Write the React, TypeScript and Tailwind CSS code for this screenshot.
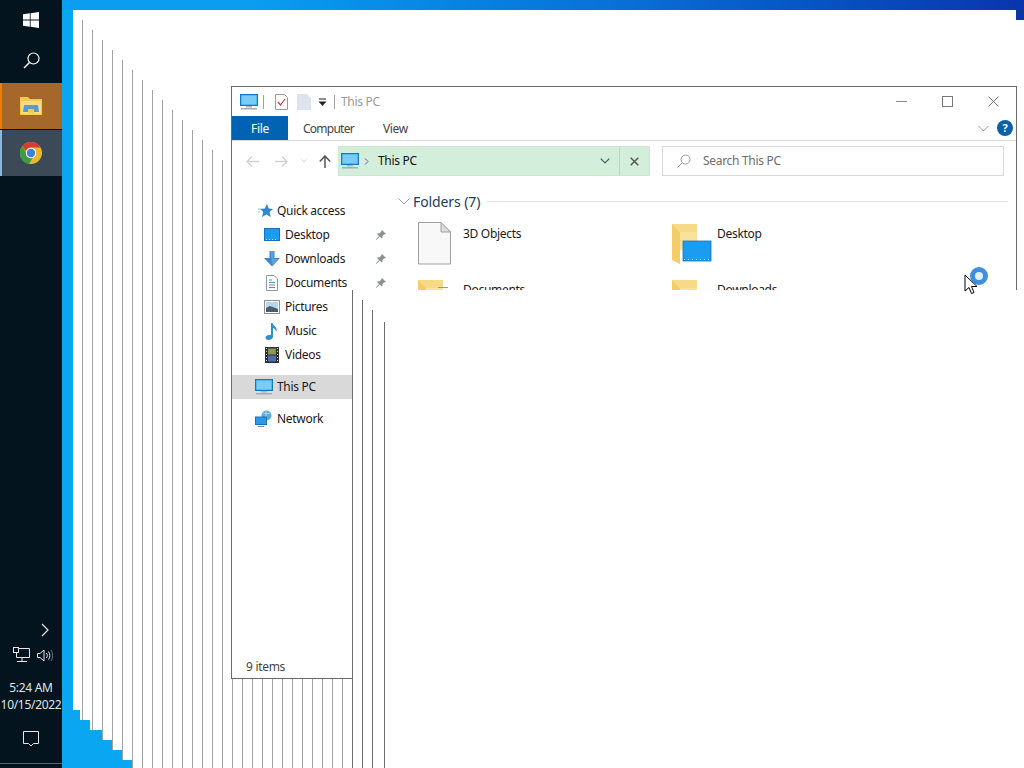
const font = 'font-["Noto_Sans","Open_Sans",sans-serif] tracking-[-0.3px]';

type Ghost = { left: number; line: number; top: number; bottom: number; right: number; color: string };

// trail of window outlines left behind on the desktop
const ghosts: Ghost[] = Array.from({ length: 32 }, (_, i) => {
  if (i === 0) return { left: 73, line: -1, top: 10, bottom: 710, right: 1016, color: '' };
  const x = i === 31 ? 384 : 82 + 10 * (i - 1);
  const left = i === 1 ? 80 : i === 2 ? 90 : x;
  const top = i === 31 ? 322 : 10 + 10 * i;
  return { left, line: x - left, top, bottom: 710 + 10 * i, right: 1024, color: i >= 28 ? '#6e6e6e' : '#a3a3a3' };
});

function GhostWindow({ g }: { g: Ghost }) {
  return (
    <div
      className="absolute bg-white"
      style={{ left: g.left - 62, top: g.top, width: g.right - g.left, height: g.bottom - g.top }}
    >
      {g.line >= 0 && <div className="absolute inset-y-0 w-px" style={{ left: g.line, background: g.color }} />}
    </div>
  );
}

function PcIcon({ size = 18 }: { size?: number }) {
  return (
    <svg width={size} height={size} viewBox="0 0 18 18">
      <rect x="0.5" y="1.5" width="17" height="11" fill="#2aa4ee" stroke="#1279c4" />
      <rect x="1.5" y="2.5" width="15" height="9" fill="#7accf7" />
      <rect x="6" y="13" width="6" height="1.5" fill="#a9bac5" />
      <rect x="1" y="15" width="16" height="1.5" fill="#a3aeb5" />
    </svg>
  );
}

function FolderIcon({ overlay, doc }: { overlay?: boolean; doc?: boolean }) {
  return (
    <svg width="40" height="42" viewBox="0 0 40 42">
      <path d="M0 2h25v26H8L0 24z" fill="#f9e29c" />
      <path d="M0 2h25v8H9z" fill="#f7da85" />
      <path d="M0 2l8 8v32L0 38z" fill="#f3cd68" />
      {doc && <path d="M20 9.500h10" stroke="#9a9a8a" />}
      {overlay && (
        <>
          <rect x="11" y="19" width="28" height="20" fill="#1a9df0" stroke="#1673ba" strokeWidth="0.8" />
          <path d="M12 37.5h26" stroke="#cfe9fb" strokeDasharray="1 3" />
        </>
      )}
    </svg>
  );
}

function NavIcon({ kind }: { kind: string }) {
  if (kind === 'star')
    return (
      <svg width="16" height="16" viewBox="0 0 16 16">
        <path d="M9 1l1.700 4.400L15 6l-3.400 3 1 5L8.500 11.500 4 14l1.300-5L2 6l4.800-.5z" fill="#2f86d2" />
        <path d="M0 6h3M0 9h2" stroke="#8fc2ea" />
      </svg>
    );
  if (kind === 'desktop')
    return (
      <svg width="16" height="14" viewBox="0 0 16 14">
        <rect x="0.500" y="0.500" width="15" height="12" fill="#1a9df0" stroke="#1673ba" />
        <path d="M2 11.500h12" stroke="#cfe9fb" strokeDasharray="1 2" />
      </svg>
    );
  if (kind === 'down')
    return (
      <svg width="16" height="16" viewBox="0 0 16 16">
        <path d="M5.500 0h5v7H16l-8 8.500L0 7h5.500z" fill="#3c86cc" />
        <path d="M6.500 0h3v8H14l-6 6z" fill="#5ba3e0" />
      </svg>
    );
  if (kind === 'doc')
    return (
      <svg width="14" height="16" viewBox="0 0 14 16">
        <path d="M1.500.5H9L12.500 4v11.500h-11z" fill="#fff" stroke="#8d9aa3" />
        <path d="M4 5h3M4 7.500h6M4 10h6M4 12.500h6" stroke="#4b91b5" />
      </svg>
    );
  if (kind === 'pics')
    return (
      <svg width="16" height="14" viewBox="0 0 16 14">
        <rect x="0.500" y="0.500" width="15" height="13" fill="#fff" stroke="#8a8f93" />
        <rect x="2" y="2" width="12" height="10" fill="#b8d6ea" />
        <path d="M2 8l4-2 8 3v3H2z" fill="#4a5d6a" />
      </svg>
    );
  if (kind === 'music')
    return (
      <svg width="14" height="17" viewBox="0 0 14 17">
        <path d="M6 0h1.500c.5 3 5.500 4 4 9-.5-2-2-3.500-3.500-4v8.500C8 15.500 6 17 3.500 17 1.500 17 0.500 15.800.5 14.500c0-1.800 2-3 5.500-2.500z" fill="#2d8fd0" />
      </svg>
    );
  if (kind === 'video')
    return (
      <svg width="14" height="16" viewBox="0 0 14 16">
        <rect width="14" height="16" fill="#2e2e2e" />
        <rect x="3" y="1.500" width="8" height="6" fill="#8a9a55" />
        <rect x="3" y="8.500" width="8" height="6" fill="#4c6fb0" />
        <path d="M1.500 1v14M12.500 1v14" stroke="#ddd" strokeDasharray="1 2" />
      </svg>
    );
  return (
    <svg width="18" height="18" viewBox="0 0 18 18">
      <circle cx="11.500" cy="5.500" r="5" fill="#5fa9d8" />
      <path d="M8 3c2 1 5 1 7 0M11 .500v10" stroke="#d3e8f5" strokeWidth="0.700" fill="none" />
      <rect x="0.500" y="7" width="11" height="7.500" fill="#2a9ae6" stroke="#1673ba" />
      <path d="M3 16.500h6" stroke="#7d8d98" />
    </svg>
  );
}

function Pin() {
  return (
    <svg width="10" height="10" viewBox="0 0 10 10">
      <path d="M6 0l4 4-1 .6-.8-.3L6.400 6.200l.2 1.600-.8.700-2-2L.800 9.700 0 9.200l3-3.200-2-2 .8-.8 1.500.3L5.500 1.600l-.2-.8z" fill="#8b8f93" />
    </svg>
  );
}

function NavRow({ icon, label, pin }: { icon: string; label: string; pin?: boolean }) {
  return (
    <div className="flex h-6 items-center pl-[31px]">
      <div className="flex w-[22px] items-center justify-center pr-[4px]">
        <NavIcon kind={icon} />
      </div>
      <span className="flex-1">{label}</span>
      {pin && (
        <span className="mr-[11px]">
          <Pin />
        </span>
      )}
    </div>
  );
}

function FolderItem({ label, doc, overlay, docFolder }: { label: string; doc?: boolean; overlay?: boolean; docFolder?: boolean }) {
  return (
    <div className="flex h-[56px]">
      <div className="w-[45px] shrink-0">
        {doc ? (
          <svg width="34" height="43" viewBox="0 0 34 43">
            <path d="M.5.500H23L32.500 10v32H.5z" fill="#f8f8f8" stroke="#a0a0a0" />
            <path d="M23 .500V10h9.500z" fill="#dcdcdc" stroke="#a0a0a0" />
          </svg>
        ) : (
          <FolderIcon overlay={overlay} doc={docFolder} />
        )}
      </div>
      <span className="mt-[3px] leading-[18px]">{label}</span>
    </div>
  );
}

function Explorer() {
  return (
    <div className="absolute left-[169px] top-[86px] flex h-[593px] w-[786px] flex-col border border-[#6b6b6b] bg-white text-[12px] text-[#1a1a1a]">
      {/* title bar */}
      <div className="flex h-[29px] shrink-0 items-center pl-[8px] text-[#9a9a9a]">
        <PcIcon />
        <div className="ml-[5px] h-[14px] w-px bg-[#a0a0a0]" />
        <svg className="ml-[11px]" width="13" height="16" viewBox="0 0 13 16">
          <path d="M.5.500h9l3 3v12H.5z" fill="#fff" stroke="#9a9a9a" />
          <path d="M3 8l2.500 3L10 5" stroke="#c8483c" strokeWidth="1.200" fill="none" />
        </svg>
        <svg className="ml-[9px]" width="14" height="16" viewBox="0 0 14 16">
          <path d="M0 0h10l4 4v12H0z" fill="#dde4ee" />
        </svg>
        <svg className="ml-[7px]" width="9" height="8" viewBox="0 0 9 8">
          <path d="M1 1h7" stroke="#222" />
          <path d="M.5 3.500h8L4.500 8z" fill="#222" />
        </svg>
        <div className="ml-[7px] h-[14px] w-px bg-[#a0a0a0]" />
        <span className="ml-[6px]">This PC</span>
        <div className="ml-auto flex items-center">
          <svg width="11" height="11" viewBox="0 0 11 11">
            <path d="M0 5.500h11" stroke="#8a8a8a" />
          </svg>
          <svg className="ml-[35px]" width="11" height="11" viewBox="0 0 11 11">
            <rect x="0.500" y="0.500" width="10" height="10" fill="none" stroke="#777" />
          </svg>
          <svg className="ml-[35px] mr-[17px]" width="11" height="11" viewBox="0 0 11 11">
            <path d="M.5.500l10 10M10.500.500l-10 10" stroke="#777" />
          </svg>
        </div>
      </div>

      {/* ribbon tabs */}
      <div className="flex h-[25px] shrink-0 items-center border-b border-[#dadada] text-[#444]">
        <div className="flex h-[24px] w-[56px] items-center justify-center bg-[#0063b1] pt-[1px] text-white">File</div>
        <span className="ml-[15px] pt-[1px] tracking-[-0.75px]">Computer</span>
        <span className="ml-[29px] pt-[1px]">View</span>
        <svg className="ml-auto" width="11" height="7" viewBox="0 0 11 7">
          <path d="M.5 1l5 5 5-5" stroke="#9a9a9a" fill="none" />
        </svg>
        <div className="ml-[8px] mr-[3px] flex h-4 w-4 items-center justify-center rounded-full bg-[#0c5fa8] text-[11px] font-bold text-white">
          ?
        </div>
      </div>

      {/* address row */}
      <div className="flex shrink-0 items-start pb-[14px] pt-[5px]">
        <div className="flex h-[30px] w-[106px] items-center pl-[14px]">
          <svg width="13" height="11" viewBox="0 0 13 11">
            <path d="M6 .5L1 5.500l5 5M1 5.500h12" stroke="#d2d2d2" strokeWidth="1.300" fill="none" />
          </svg>
          <svg className="ml-[16px]" width="13" height="11" viewBox="0 0 13 11">
            <path d="M7 .5l5 5-5 5M12 5.500H0" stroke="#d2d2d2" strokeWidth="1.300" fill="none" />
          </svg>
          <svg className="ml-[13px]" width="6" height="4" viewBox="0 0 6 4">
            <path d="M.5.500l2.500 2.500L5.500.500" stroke="#d2d2d2" fill="none" />
          </svg>
          <svg className="ml-[12px]" width="12" height="13" viewBox="0 0 12 13">
            <path d="M.8 6.500L6 1l5.200 5.500M6 1v12" stroke="#555" strokeWidth="1.500" fill="none" />
          </svg>
        </div>
        <div className="flex h-[30px] w-[312px] items-center border border-[#cbe6d4] bg-[#d3efdc]">
          <div className="ml-[2px]">
            <PcIcon />
          </div>
          <svg className="ml-[5px]" width="5" height="7" viewBox="0 0 5 7">
            <path d="M1 .5l3 3-3 3" stroke="#666" fill="none" />
          </svg>
          <span className="ml-[9px] flex-1 text-[#111]">This PC</span>
          <svg className="mr-[9px]" width="10" height="6" viewBox="0 0 10 6">
            <path d="M.7.700L5 5 9.300.700" stroke="#555" strokeWidth="1.200" fill="none" />
          </svg>
          <div className="flex h-full w-[30px] items-center justify-center border-l border-[#bcd8c5]">
            <svg width="9" height="9" viewBox="0 0 9 9">
              <path d="M.7.700l7.600 7.600M8.300.700L.7 8.300" stroke="#555" strokeWidth="1.500" />
            </svg>
          </div>
        </div>
        <div className="ml-[12px] flex h-[30px] w-[342px] items-center border border-[#d9d9d9] pl-[14px] text-[#6d6d6d]">
          <svg width="14" height="14" viewBox="0 0 14 14">
            <circle cx="8.500" cy="5.500" r="4.500" fill="none" stroke="#9a9a9a" />
            <path d="M5 9l-4.500 4.500" stroke="#9a9a9a" />
          </svg>
          <span className="ml-[12px]">Search This PC</span>
        </div>
      </div>

      {/* body */}
      <div className="flex min-h-0 flex-1">
        <nav className="flex w-[165px] shrink-0 flex-col pt-[9px]">
          <div className="flex h-6 items-center pl-[26px]">
            <div className="w-[19px]">
              <NavIcon kind="star" />
            </div>
            <span>Quick access</span>
          </div>
          <NavRow icon="desktop" label="Desktop" pin />
          <NavRow icon="down" label="Downloads" pin />
          <NavRow icon="doc" label="Documents" pin />
          <NavRow icon="pics" label="Pictures" />
          <NavRow icon="music" label="Music" />
          <NavRow icon="video" label="Videos" />
          <div className="mt-2 flex h-6 items-center bg-[#d9d9d9] pl-[23px]">
            <div className="w-[22px]">
              <PcIcon />
            </div>
            <span>This PC</span>
          </div>
          <div className="mt-2 flex h-6 items-center pl-[23px]">
            <div className="w-[22px]">
              <NavIcon kind="net" />
            </div>
            <span>Network</span>
          </div>
          <div className="mt-auto flex h-[22px] items-center pl-[14px] text-[#444]">9 items</div>
        </nav>
        <section className="min-w-0 flex-1">
          <div className="flex h-[22px] items-center pl-[1px]">
            <svg width="12" height="7" viewBox="0 0 12 7">
              <path d="M.5.500L6 6 11.500.500" stroke="#9aa3ab" fill="none" />
            </svg>
            <span className="ml-[3px] text-[14px] tracking-[-0.1px] text-[#1e3a5f]">Folders (7)</span>
            <div className="ml-[7px] mr-[8px] h-px flex-1 bg-[#e3e3e3]" />
          </div>
          <div className="grid grid-cols-[254px_254px] pl-[21px] pt-[10px]">
            <FolderItem label="3D Objects" doc />
            <FolderItem label="Desktop" overlay />
            <FolderItem label="Documents" docFolder />
            <FolderItem label="Downloads" />
          </div>
        </section>
      </div>
    </div>
  );
}

function Taskbar() {
  return (
    <aside className="relative flex h-full w-[62px] shrink-0 flex-col bg-[#04141f] text-[12px] text-[#dfe6ea]">
      <div className="flex h-[40px] items-center justify-center">
        <svg width="16" height="16" viewBox="0 0 16 16">
          <path d="M0 2.300l6.800-1v6.300H0zM7.600 1.200L16 0v7.600H7.600zM0 8.400h6.800v6.300l-6.800-1zM7.600 8.400H16V16l-8.400-1.200z" fill="#fff" />
        </svg>
      </div>
      <div className="flex h-[43px] items-center justify-center pb-[3px]">
        <svg width="17" height="17" viewBox="0 0 17 17">
          <circle cx="10.500" cy="6.500" r="5.500" fill="none" stroke="#fff" strokeWidth="1.200" />
          <path d="M6.500 10.500L1 16" stroke="#fff" strokeWidth="1.400" />
        </svg>
      </div>
      <div className="flex h-[46px] items-center justify-center border-l-2 border-[#f07c00] bg-[#a5672a] pr-[2px]">
        <svg width="22" height="20" viewBox="0 0 22 20">
          <path d="M0 1h8l2 2h12v16H0z" fill="#f4c84e" />
          <rect x="1" y="5" width="20" height="13" fill="#f8dc88" />
          <path d="M4 9h14l1 7H3z" fill="#5e9ac8" />
          <rect x="8" y="13" width="6" height="4" fill="#f4c84e" />
        </svg>
      </div>
      <div className="mt-px flex h-[46px] items-center justify-center border-l-2 border-[#8ab8e0] bg-[#3c4a58] pr-[2px]">
        <svg width="22" height="22" viewBox="0 0 22 22">
          <circle cx="11" cy="11" r="11" fill="#e8b92f" />
          <path d="M11 0a11 11 0 0 1 9.500 5.500H11a5.500 5.500 0 0 0-5.200 3.700L2.400 4A11 11 0 0 1 11 0z" fill="#d63c30" />
          <path d="M2.400 4l4.600 8.500a5 5 0 0 0 5.500 3.400L9 22A11 11 0 0 1 2.400 4z" fill="#3f9a45" />
          <circle cx="11" cy="11" r="5.200" fill="#fff" />
          <circle cx="11" cy="11" r="4.200" fill="#3f7fe0" />
        </svg>
      </div>
      <div className="flex-1" />
      <div className="flex flex-col items-center">
        <svg className="ml-[28px]" width="9" height="14" viewBox="0 0 9 14">
          <path d="M1 1l6 6-6 6" stroke="#e6e6e6" strokeWidth="1.200" fill="none" />
        </svg>
        <div className="ml-[4px] mt-[10px] flex items-center">
          <svg width="17" height="16" viewBox="0 0 17 16">
            <path d="M3.500 1.500h13v9h-13M9 10.500v3.500M4 14.500h10" stroke="#e6e6e6" fill="none" />
            <rect x="0.500" y="0.500" width="5" height="5" fill="#04141f" stroke="#e6e6e6" />
            <path d="M3.500 5.500v5" stroke="#e6e6e6" />
          </svg>
          <svg className="ml-[7px]" width="16" height="13" viewBox="0 0 16 13">
            <path d="M.5 4.500h2.500l4-3.500v11l-4-3.500H.5zM9.500 4c1 1.500 1 3.500 0 5M11.500 2.500c1.800 2.500 1.800 5.500 0 8" stroke="#e6e6e6" fill="none" />
            <path d="M14 1c2 3 2 8 0 11" stroke="#6a7680" fill="none" />
          </svg>
        </div>
        <div className="mt-[16px] text-center leading-[17px]">
          <div>5:24 AM</div>
          <div>10/15/2022</div>
        </div>
        <svg className="mb-[16px] mt-[18px]" width="16" height="16" viewBox="0 0 16 16">
          <path d="M.5.500h15v12h-5l-2.500 2.500-2.500-2.500h-5z" stroke="#e6e6e6" fill="none" />
        </svg>
        <div className="h-px w-full bg-[#55626b]" />
        <div className="h-[4px]" />
      </div>
    </aside>
  );
}

export default function App() {
  return (
    <div className={`flex h-[768px] w-[1024px] overflow-hidden ${font}`}>
      <Taskbar />
      <main className="relative flex-1 overflow-hidden bg-linear-to-r from-[#0a9df0] from-20% via-[#0a6dd6] via-60% to-[#0a35ad]">
        <div className="absolute bottom-0 left-0 right-0 top-[20px] bg-[#0aa6f2]" />
        <div className="absolute left-0 top-[10px] h-[10px] w-[11px] bg-[#0aa6f2]" />
        <div className="absolute right-0 top-[10px] h-[10px] w-[8px] bg-[#0a35ad]" />
        {ghosts.slice(0, 28).map((g, i) => (
          <GhostWindow key={i} g={g} />
        ))}
        <Explorer />
        {ghosts.slice(28).map((g, i) => (
          <GhostWindow key={i} g={g} />
        ))}
        {/* busy cursor */}
        <div className="absolute left-[908px] top-[267px] h-[18px] w-[18px] rounded-full border-[5px] border-[#3f8fe0] bg-[#dff0ff] blur-[0.6px]" />
        <svg className="absolute left-[902px] top-[274px]" width="14" height="21" viewBox="0 0 14 21">
          <path d="M1 1v16l4-3.500 2.500 6 2.500-1-2.500-6H13z" fill="#fff" stroke="#000" />
        </svg>
      </main>
    </div>
  );
}
